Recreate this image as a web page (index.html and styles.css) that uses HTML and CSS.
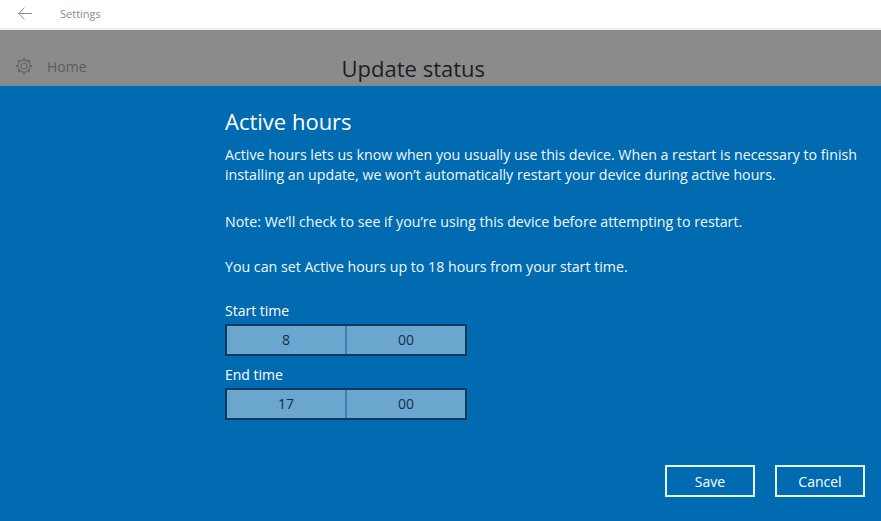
FILE: index.html
```html
<!DOCTYPE html>
<html lang="en">
<head>
    <meta charset="UTF-8">
    <title>Settings</title>
    <link rel="stylesheet" href="styles.css">
</head>
<body>
    <div class="title-bar">
        <svg class="back-icon" width="14" height="13" viewBox="0 0 14 13">
            <path d="M6.5 .6 L.8 6.5 L6.5 12.4 M.8 6.5 H14" fill="none" stroke="#8a8a8a" stroke-width="1"/>
        </svg>
        <span class="title-text">Settings</span>
    </div>

    <div class="page-behind">
        <div class="nav-home">
            <svg class="gear-icon" width="18" height="18" viewBox="0 0 18 18">
                <circle cx="9" cy="9" r="3" fill="none" stroke="#666" stroke-width="1.2"/>
                <circle cx="9" cy="9" r="6.2" fill="none" stroke="#666" stroke-width="1.2"/>
                <path d="M9 .8 V3 M9 15 V17.2 M.8 9 H3 M15 9 H17.2 M3.2 3.2 L4.7 4.7 M13.3 13.3 L14.8 14.8 M14.8 3.2 L13.3 4.7 M4.7 13.3 L3.2 14.8" stroke="#666" stroke-width="2"/>
            </svg>
            <span>Home</span>
        </div>
        <div class="behind-title">Update status</div>
    </div>

    <div class="dialog">
        <div class="dialog-body">
            <h1>Active hours</h1>
            <p class="intro">Active hours lets us know when you usually use this device. When a restart is necessary to finish installing an update, we won’t automatically restart your device during active hours.</p>
            <p>Note: We’ll check to see if you’re using this device before attempting to restart.</p>
            <p class="last">You can set Active hours up to 18 hours from your start time.</p>

            <div class="time-group">
                <label>Start time</label>
                <div class="time-picker">
                    <div class="time-cell">8</div>
                    <div class="time-cell">00</div>
                </div>
            </div>
            <div class="time-group">
                <label>End time</label>
                <div class="time-picker">
                    <div class="time-cell">17</div>
                    <div class="time-cell">00</div>
                </div>
            </div>
        </div>

        <div class="dialog-actions">
            <button class="btn">Save</button>
            <button class="btn">Cancel</button>
        </div>
    </div>
</body>
</html>
```

FILE: styles.css
```css
* {
    margin: 0;
    padding: 0;
    box-sizing: border-box;
}

html, body {
    height: 100%;
}

body {
    font-family: "Open Sans", "Noto Sans", sans-serif;
    display: flex;
    flex-direction: column;
    overflow: hidden;
    background: #006bb0;
}

.title-bar {
    height: 30px;
    background: #fff;
    border-bottom: 2px solid #f0f0f0;
    display: flex;
    align-items: center;
    padding-left: 18px;
    flex-shrink: 0;
}

.back-icon {
    margin-top: -2px;
}

.title-text {
    margin-left: 28px;
    margin-top: -2px;
    font-size: 11px;
    color: #8a8a8a;
}

.page-behind {
    height: 56px;
    background: #8b8b8b;
    border-bottom: 2px solid #7f8a93;
    display: flex;
    flex-shrink: 0;
}

.nav-home {
    display: flex;
    align-items: center;
    gap: 14px;
    padding: 27px 0 0 15px;
    height: 45px;
    font-size: 14px;
    color: #5c5c5c;
}

.behind-title {
    margin-left: 255px;
    padding-top: 23px;
    font-size: 22px;
    line-height: 30px;
    color: #1f1f1f;
    white-space: nowrap;
}

.dialog {
    flex: 1;
    display: flex;
    flex-direction: column;
    color: #fff;
    padding: 21px 16px 24px 225px;
}

.dialog-body {
    flex: 1;
}

h1 {
    font-size: 22px;
    font-weight: 400;
    line-height: 28px;
    margin-bottom: 10px;
}

p {
    font-size: 14.2px;
    line-height: 20px;
    margin-bottom: 25px;
    color: #f2f8fc;
}

p.intro {
    margin-bottom: 27px;
}

p.last {
    margin-bottom: 24px;
}

.time-group {
    margin-bottom: 9px;
}

.time-group label {
    display: block;
    font-size: 14px;
    line-height: 20px;
    margin-bottom: 3px;
}

.time-picker {
    width: 242px;
    height: 32px;
    display: flex;
    background: #6ba6cf;
    border: 2px solid #0e3a5e;
}

.time-cell {
    flex: 1;
    display: flex;
    align-items: center;
    justify-content: center;
    padding-bottom: 2px;
    font-size: 14px;
    color: #10304c;
}

.time-cell + .time-cell {
    border-left: 2px solid #3f80b3;
}

.dialog-actions {
    display: flex;
    justify-content: flex-end;
    gap: 20px;
}

.btn {
    width: 90px;
    height: 32px;
    background: transparent;
    border: 2px solid #e6f3fa;
    color: #fff;
    font-family: inherit;
    font-size: 14px;
}
```
